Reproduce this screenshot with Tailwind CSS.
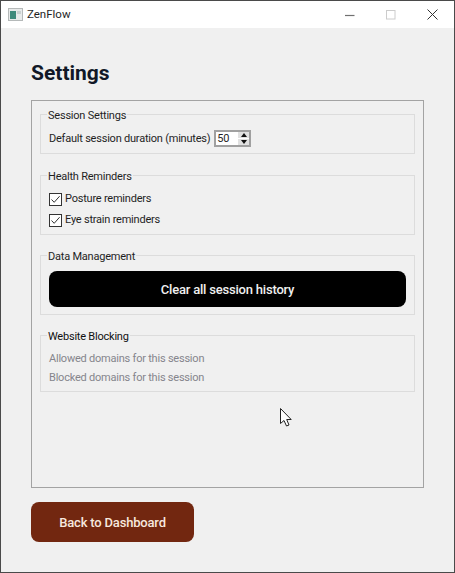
<!DOCTYPE html>
<html lang="en">
<head>
  <meta charset="UTF-8">
  <title>ZenFlow</title>
  <script src="https://cdn.jsdelivr.net/npm/@tailwindcss/browser@4"></script>
</head>
<body class="bg-[#f0f0f0]">
  <div class="relative w-[455px] h-[573px] flex flex-col overflow-hidden border border-[#4a4a4a] bg-[#f0f0f0] text-[#1f1f1f] font-['Roboto','Noto_Sans',sans-serif]">

    <!-- title bar -->
    <div class="h-[27px] shrink-0 bg-white flex items-center pl-[7px]">
      <svg width="15" height="13" viewBox="0 0 15 13" class="mr-[4px]">
        <rect x="0.5" y="0.5" width="14" height="12" fill="#e8eaea" stroke="#b5b9b9"/>
        <rect x="2" y="3" width="6" height="8" fill="#3f8a7c"/>
        <rect x="9" y="3" width="4" height="3" fill="#c9d0d0"/>
      </svg>
      <span class="text-[11.5px] leading-none">ZenFlow</span>
      <div class="ml-auto flex items-center">
        <svg width="10" height="10" viewBox="0 0 10 10" class="mr-[31px]"><path d="M0 5.5H9.5" stroke="#707070" stroke-width="1.2"/></svg>
        <svg width="10" height="10" viewBox="0 0 10 10" class="mr-[31px]"><rect x="0.5" y="0.5" width="8.5" height="8.5" fill="none" stroke="#cccccc"/></svg>
        <svg width="11" height="11" viewBox="0 0 11 11" class="mr-[16px]"><path d="M0.5 0.5L10.5 10.5M10.5 0.5L0.5 10.5" stroke="#333333" stroke-width="1"/></svg>
      </div>
    </div>

    <!-- content -->
    <div class="flex-1 flex flex-col pl-[30px] pr-[30px]">
      <h1 class="mt-[31px] h-[28px] text-[21px] leading-[28px] font-bold text-[#111827]">Settings</h1>

      <div class="mt-[13px] h-[388px] w-[393px] border border-[#a3a3a3] px-[8px] pt-[6px] flex flex-col gap-[13px] tracking-[-0.22px]">

        <fieldset class="border border-[#dcdcdc] h-[47px] mb-px min-w-0">
          <legend class="ml-[6px] px-px text-[11px] leading-[14px] relative top-[2px]">Session Settings</legend>
          <div class="flex items-center pl-[8px] mt-[9px]">
            <span class="text-[11px] leading-[16px]">Default session duration (minutes)</span>
            <div class="ml-[4px] w-[37px] h-[17px] border-2 border-[#a0a0a0] bg-white flex items-center justify-between">
              <span class="text-[11px] leading-none pl-[1px]">50</span>
              <div class="w-[11px] h-[13px] flex flex-col gap-px bg-white">
                <div class="flex-1 bg-[#e1e1e1] flex items-center justify-center"><svg width="6" height="4" viewBox="0 0 6 4"><path d="M3 0L6 4H0Z" fill="#111"/></svg></div>
                <div class="flex-1 bg-[#e1e1e1] flex items-center justify-center"><svg width="6" height="4" viewBox="0 0 6 4"><path d="M0 0H6L3 4Z" fill="#111"/></svg></div>
              </div>
            </div>
          </div>
        </fieldset>

        <fieldset class="border border-[#dcdcdc] h-[67px] min-w-0">
          <legend class="ml-[6px] px-px text-[11px] leading-[14px] relative top-[2px]">Health Reminders</legend>
          <div class="flex flex-col gap-[5px] pl-[8px] mt-[9px]">
            <label class="flex items-center gap-[3px] text-[11px] leading-[16px]">
              <svg width="13" height="13" viewBox="0 0 13 13"><rect x="0.5" y="0.5" width="12" height="12" fill="#fff" stroke="#333"/><path d="M2.5 6.5L5.2 9.3L10.6 3.2" fill="none" stroke="#333" stroke-width="1"/></svg>
              Posture reminders
            </label>
            <label class="flex items-center gap-[3px] text-[11px] leading-[16px]">
              <svg width="13" height="13" viewBox="0 0 13 13"><rect x="0.5" y="0.5" width="12" height="12" fill="#fff" stroke="#333"/><path d="M2.5 6.5L5.2 9.3L10.6 3.2" fill="none" stroke="#333" stroke-width="1"/></svg>
              Eye strain reminders
            </label>
          </div>
        </fieldset>

        <fieldset class="border border-[#dcdcdc] h-[67px] min-w-0">
          <legend class="ml-[6px] px-px text-[11px] leading-[14px] relative top-[2px]">Data Management</legend>
          <div class="px-[8px] mt-[9px]">
            <button class="w-[357px] h-[36px] pt-[2px] rounded-[8px] bg-black text-[#f0f0f0] text-[13px] font-medium tracking-[-0.2px]">Clear all session history</button>
          </div>
        </fieldset>

        <fieldset class="border border-[#dcdcdc] h-[64px] min-w-0">
          <legend class="ml-[6px] px-px text-[11px] leading-[14px] relative top-[2px] text-[#111]">Website Blocking</legend>
          <div class="flex flex-col gap-[3px] pl-[8px] mt-[9px] text-[11px] leading-[16px] text-[#85858c]">
            <div>Allowed domains for this session</div>
            <div>Blocked domains for this session</div>
          </div>
        </fieldset>
      </div>

      <button class="mt-[14px] w-[163px] h-[40px] pt-[2px] rounded-[8px] bg-[#722710] text-[#f7e8de] text-[13px] font-medium tracking-[-0.18px]">Back to Dashboard</button>
    </div>

    <!-- mouse pointer -->
    <svg width="12" height="19" viewBox="0 0 12 19" class="absolute left-[279px] top-[407px]">
      <path d="M0.5 0.5V15.5L4 12.5L6.5 18L9 17L6.7 11.5H11.2Z" fill="#fff" stroke="#222" stroke-width="1"/>
    </svg>
  </div>
</body>
</html>
